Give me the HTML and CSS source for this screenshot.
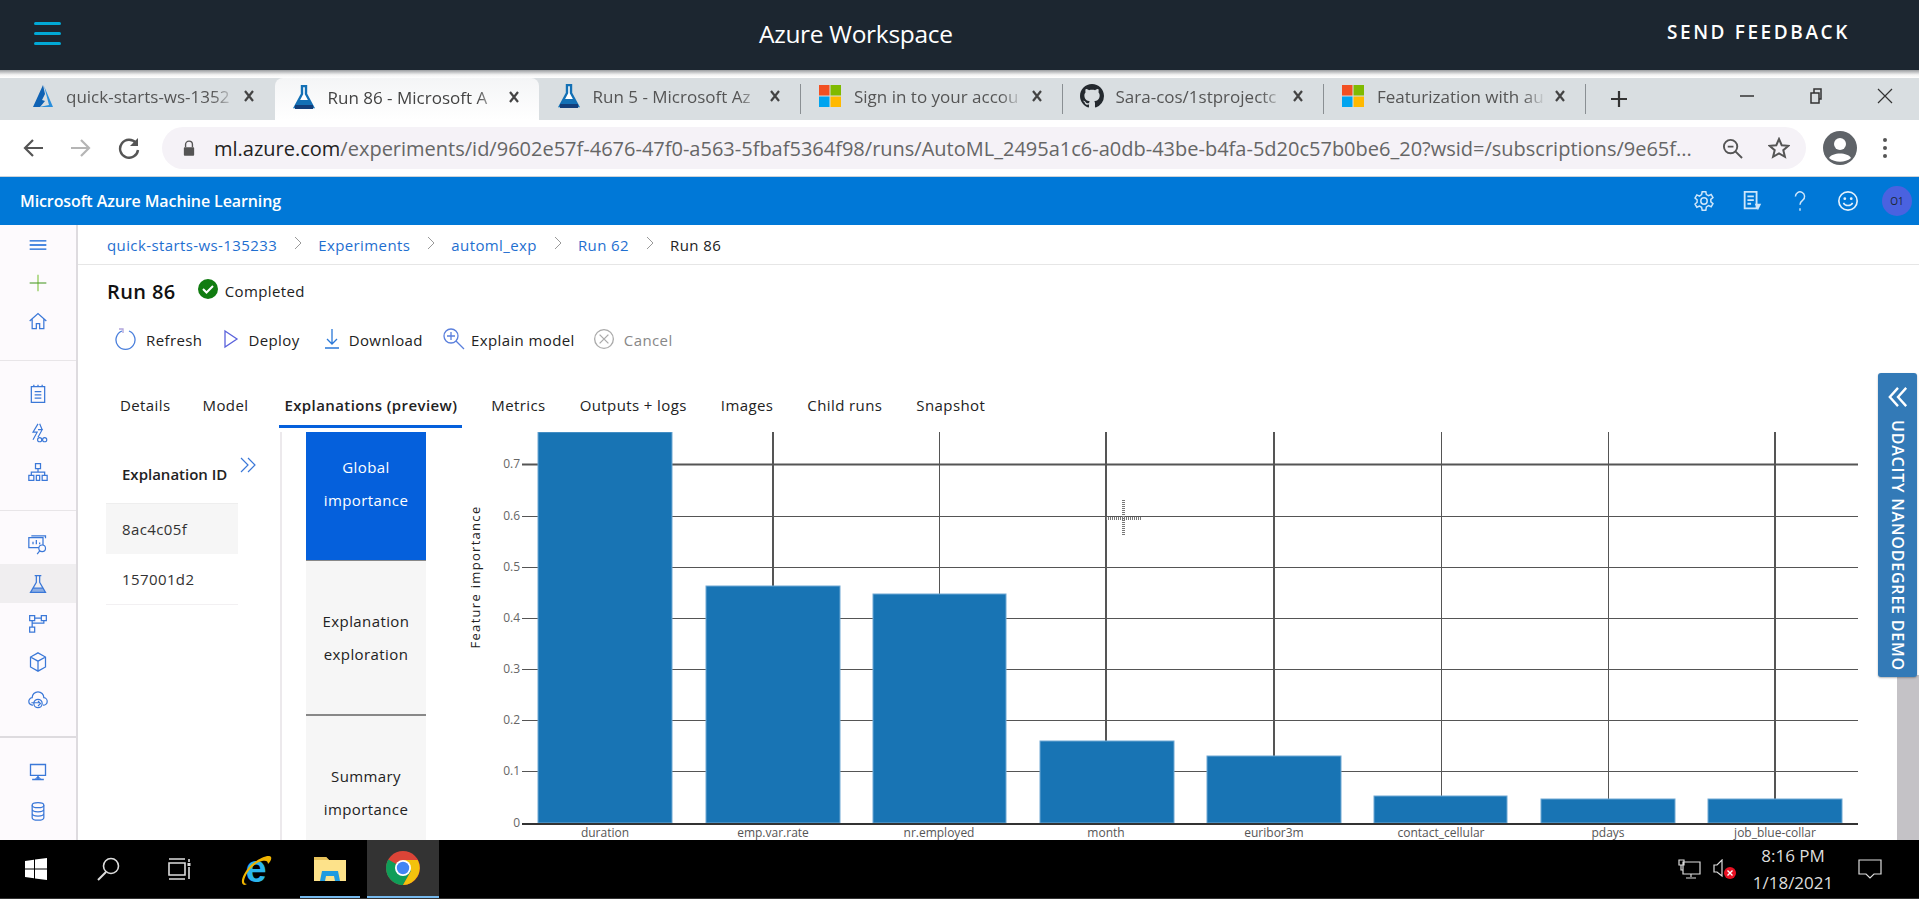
FILE: index.html
```html
<!DOCTYPE html>
<html>
<head>
<meta charset="utf-8">
<title>Azure Workspace</title>
<link rel="stylesheet" href="styles.css">
</head>
<body>
<svg class="defs" width="0" height="0">
  <defs>
    <g id="flask">
      <path d="M10 1h4v8l7 13H3l7-13z" fill="#fff" stroke="#1370b5" stroke-width="2.4"/>
      <path d="M7 15h10l4 7H3z" fill="#1370b5"/>
      <path d="M3 20h18v4H3z" fill="#123e7a"/>
    </g>
    <g id="ms">
      <rect x="1" y="1" width="10.5" height="10.5" fill="#f25022"/>
      <rect x="12.5" y="1" width="10.5" height="10.5" fill="#7fba00"/>
      <rect x="1" y="12.5" width="10.5" height="10.5" fill="#00a4ef"/>
      <rect x="12.5" y="12.5" width="10.5" height="10.5" fill="#ffb900"/>
    </g>
    <path id="tabx" d="M1 1l8 10M9 1L1 11" fill="none" stroke="#444" stroke-width="2.2"/>
  </defs>
</svg>

<header class="topbar">
  <div class="burger"><i></i><i></i><i></i></div>
  <div class="topbar-title">Azure Workspace</div>
  <div class="topbar-send">SEND FEEDBACK</div>
</header>
<div class="topbar-shadow"></div>

<div class="tabstrip">
  <div class="tab">
    <svg class="tab-icon" viewBox="0 0 24 24"><path d="M13 1L3 23h7l5-6-3-1 3-6z" fill="#0f62b4"/><path d="M14 2l9 21H9l10-2z" fill="#2a8fdc"/></svg>
    <span class="tab-title">quick-starts-ws-1352</span>
    <svg class="tab-x" viewBox="0 0 10 12"><use href="#tabx"/></svg>
  </div>
  <i class="tab-sep hidden"></i>
  <div class="tab tab-active">
    <svg class="tab-icon" viewBox="0 0 24 24"><use href="#flask"/></svg>
    <span class="tab-title">Run 86 - Microsoft A</span>
    <svg class="tab-x" viewBox="0 0 10 12"><use href="#tabx"/></svg>
  </div>
  <i class="tab-sep hidden"></i>
  <div class="tab">
    <svg class="tab-icon" viewBox="0 0 24 24"><use href="#flask"/></svg>
    <span class="tab-title">Run 5 - Microsoft Az</span>
    <svg class="tab-x" viewBox="0 0 10 12"><use href="#tabx"/></svg>
  </div>
  <i class="tab-sep"></i>
  <div class="tab">
    <svg class="tab-icon" viewBox="0 0 24 24"><use href="#ms"/></svg>
    <span class="tab-title">Sign in to your accou</span>
    <svg class="tab-x" viewBox="0 0 10 12"><use href="#tabx"/></svg>
  </div>
  <i class="tab-sep"></i>
  <div class="tab">
    <svg class="tab-icon" viewBox="0 0 16 16"><path fill="#24292e" d="M8 0C3.58 0 0 3.58 0 8c0 3.54 2.29 6.53 5.47 7.59.4.07.55-.17.55-.38 0-.19-.01-.82-.01-1.49-2.01.37-2.53-.49-2.69-.94-.09-.23-.48-.94-.82-1.13-.28-.15-.68-.52-.01-.53.63-.01 1.08.58 1.23.82.72 1.21 1.87.87 2.33.66.07-.52.28-.87.51-1.07-1.78-.2-3.64-.89-3.64-3.95 0-.87.31-1.59.82-2.15-.08-.2-.36-1.02.08-2.12 0 0 .67-.21 2.2.82.64-.18 1.32-.27 2-.27s1.36.09 2 .27c1.53-1.04 2.2-.82 2.2-.82.44 1.1.16 1.92.08 2.12.51.56.82 1.27.82 2.15 0 3.07-1.87 3.75-3.65 3.95.29.25.54.73.54 1.48 0 1.07-.01 1.93-.01 2.2 0 .21.15.46.55.38A8.01 8.01 0 0 0 16 8c0-4.42-3.58-8-8-8z"/></svg>
    <span class="tab-title">Sara-cos/1stprojectc</span>
    <svg class="tab-x" viewBox="0 0 10 12"><use href="#tabx"/></svg>
  </div>
  <i class="tab-sep"></i>
  <div class="tab">
    <svg class="tab-icon" viewBox="0 0 24 24"><use href="#ms"/></svg>
    <span class="tab-title">Featurization with au</span>
    <svg class="tab-x" viewBox="0 0 10 12"><use href="#tabx"/></svg>
  </div>
  <i class="tab-sep"></i>
  <svg class="tab-plus" viewBox="0 0 18 18"><path d="M9 1v16M1 9h16" stroke="#333" stroke-width="2.2"/></svg>
  <div class="winctl">
    <svg viewBox="0 0 16 16"><path d="M1 8h14" stroke="#333" stroke-width="1.5"/></svg>
    <svg viewBox="0 0 16 16"><path d="M3 5h8v10H3zM6 5V1h7v10h-2" fill="none" stroke="#333" stroke-width="1.5"/></svg>
    <svg viewBox="0 0 16 16"><path d="M1 1l14 14M15 1L1 15" stroke="#333" stroke-width="1.2"/></svg>
  </div>
</div>

<div class="toolbar">
  <svg class="nav-icon" viewBox="0 0 22 22"><path d="M21 11H3M11 3l-8 8 8 8" fill="none" stroke="#555" stroke-width="2.2"/></svg>
  <svg class="nav-icon" viewBox="0 0 22 22"><path d="M1 11h18M11 3l8 8-8 8" fill="none" stroke="#b5b5b5" stroke-width="2.2"/></svg>
  <svg class="nav-icon" viewBox="0 0 22 22"><path d="M18 6a9 9 0 1 0 2 7" fill="none" stroke="#555" stroke-width="2.4"/><path d="M20 1v8h-8z" fill="#555"/></svg>
  <div class="urlbar">
    <svg class="lock" viewBox="0 0 14 18"><path d="M3 8V5a4 4 0 0 1 8 0v3" fill="none" stroke="#555" stroke-width="1.6"/><rect x="1" y="8" width="12" height="10" rx="1" fill="#555"/></svg>
    <span class="url"><b>ml.azure.com</b>/experiments/id/9602e57f-4676-47f0-a563-5fbaf5364f98/runs/AutoML_2495a1c6-a0db-43be-b4fa-5d20c57b0be6_20?wsid=/subscriptions/9e65f...</span>
    <svg class="url-zoom" viewBox="0 0 22 22"><circle cx="9" cy="9" r="7" fill="none" stroke="#555" stroke-width="2"/><path d="M14 14l7 7M6 9h6" stroke="#555" stroke-width="2"/></svg>
    <svg class="url-star" viewBox="0 0 22 22"><path d="M11 2l2.7 6.2 6.8.6-5.2 4.4 1.6 6.6L11 16.3l-5.9 3.5 1.6-6.6L1.500 8.800l6.800-.6z" fill="none" stroke="#555" stroke-width="2"/></svg>
  </div>
  <svg class="profile" viewBox="0 0 34 34"><circle cx="17" cy="17" r="17" fill="#5f6368"/><circle cx="17" cy="13" r="6" fill="#fff"/><path d="M6 27c3-6 19-6 22 0-6 5-16 5-22 0z" fill="#fff"/></svg>
  <div class="dots"><i></i><i></i><i></i></div>
</div>

<div class="azbar">
  <div class="azbar-title">Microsoft Azure Machine Learning</div>
  <div class="azbar-icons">
    <svg viewBox="0 0 24 24"><circle cx="12" cy="12" r="3.500" fill="none" stroke="#cfe6fa" stroke-width="1.6"/><path d="M10 2h4l.6 3 2.400 1.200 2.800-1.300 2 3.400-2.400 2 .1 2.600 2.300 2-2 3.400-2.800-1.200-2.400 1.300L14 22h-4l-.6-3.100-2.400-1.300-2.800 1.200-2-3.400 2.300-2 0-2.700-2.300-1.900 2-3.400 2.800 1.300L9.400 5z" fill="none" stroke="#cfe6fa" stroke-width="1.600"/></svg>
    <svg viewBox="0 0 24 24"><path d="M4 2h13v18H4zM7 7h7M7 11h7M7 15h4" fill="none" stroke="#cfe6fa" stroke-width="2"/><path d="M15 15h7l-3.500 7z" fill="#cfe6fa"/></svg>
    <svg viewBox="0 0 24 24"><path d="M7 7a5 5 0 1 1 8 4c-2 1.500-3 2.500-3 5M12 20v2.500" fill="none" stroke="#cfe6fa" stroke-width="1.600"/></svg>
    <svg viewBox="0 0 24 24"><circle cx="12" cy="12" r="10" fill="none" stroke="#e4f1fc" stroke-width="1.800"/><circle cx="8.500" cy="9.500" r="1.500" fill="#e4f1fc"/><circle cx="15.500" cy="9.500" r="1.500" fill="#e4f1fc"/><path d="M7 14c2 4 8 4 10 0" fill="none" stroke="#e4f1fc" stroke-width="1.600"/></svg>
    <div class="avatar">O1</div>
  </div>
</div>

<main class="main">
  <nav class="sidebar">
    <div class="side-group side-first">
      <div class="side-item"><svg viewBox="0 0 24 24"><path d="M2 7h20M2 12h20M2 17h20" stroke="#0f62d6" stroke-width="1.600"/></svg></div>
      <div class="side-item"><svg viewBox="0 0 24 24"><path d="M12 2v20" stroke="#a9d67d" stroke-width="2"/><path d="M2 12h20" stroke="#4c9a2a" stroke-width="1.300"/></svg></div>
      <div class="side-item"><svg viewBox="0 0 24 24"><path d="M2 12l10-9 10 9M5 10v11h5v-6h4v6h5V10" fill="none" stroke="#3b78d8" stroke-width="1.500"/></svg></div>
    </div>
    <div class="side-group">
      <div class="side-item"><svg viewBox="0 0 24 24"><path d="M4 3h16v19H4zM7 1v3M12 1v3M17 1v3M8 9h8M8 13h8M8 17h8" fill="none" stroke="#3b78d8" stroke-width="1.500"/></svg></div>
      <div class="side-item"><svg viewBox="0 0 24 24"><path d="M12 1L6 11h5l-5 9M12 8h5l-5 9M14 1l3 7" fill="none" stroke="#3b78d8" stroke-width="1.400"/><circle cx="14" cy="20" r="2.500" fill="none" stroke="#3b78d8" stroke-width="1.400"/><circle cx="20" cy="20" r="2.500" fill="none" stroke="#3b78d8" stroke-width="1.400"/></svg></div>
      <div class="side-item"><svg viewBox="0 0 24 24"><path d="M9 2h6v6H9zM1 16h6v6H1zM17 16h6v6h-6zM12 8v4M4 16v-4h16v4M10 16h4v6h-4z" fill="none" stroke="#3b78d8" stroke-width="1.500"/></svg></div>
    </div>
    <div class="side-group side-tall">
      <div class="side-item"><svg viewBox="0 0 24 24"><path d="M1 3h17v12H1zM4 1h17v3M6 11V8M10 11V6M14 11V9" fill="none" stroke="#3b78d8" stroke-width="1.500"/><circle cx="17" cy="16" r="4" fill="#fdfafd" stroke="#3b78d8" stroke-width="1.400"/><path d="M14 19l-3 4" stroke="#3b78d8" stroke-width="1.400"/></svg></div>
      <div class="side-item side-active"><svg viewBox="0 0 24 24"><path d="M8 2h8M10 2v8L3 22h18l-7-12V2M6 17h12" fill="none" stroke="#3b78d8" stroke-width="1.500"/><path d="M6 17h12l3 5H3z" fill="#3b78d8" opacity=".55"/></svg></div>
      <div class="side-item"><svg viewBox="0 0 24 24"><path d="M2 3h6v6H2zM16 3h6v6h-6zM2 17h6v6H2zM8 6h8M5 9v8M19 9v3H5" fill="none" stroke="#3b78d8" stroke-width="1.500"/></svg></div>
      <div class="side-item"><svg viewBox="0 0 24 24"><path d="M12 1l9 5v12l-9 5-9-5V6zM3 6l9 5 9-5M12 11v12" fill="none" stroke="#3b78d8" stroke-width="1.500"/></svg></div>
      <div class="side-item"><svg viewBox="0 0 24 24"><path d="M6 17a4.500 4.500 0 0 1-1-9 7 7 0 0 1 14 0 4.500 4.500 0 0 1-1 9" fill="none" stroke="#3b78d8" stroke-width="1.500"/><circle cx="12" cy="15" r="5" fill="none" stroke="#3b78d8" stroke-width="1.500"/><path d="M4 14h10M12 12l3 3-3 3" fill="none" stroke="#3b78d8" stroke-width="1.300"/></svg></div>
    </div>
    <div class="side-group side-last">
      <div class="side-item"><svg viewBox="0 0 24 24"><path d="M3 3h18v13H3zM12 16v4M5 21h14" fill="none" stroke="#3b78d8" stroke-width="1.600"/><path d="M8 20l4-3 4 3z" fill="#3b78d8"/></svg></div>
      <div class="side-item"><svg viewBox="0 0 24 24"><ellipse cx="12" cy="5" rx="7" ry="3" fill="none" stroke="#3b78d8" stroke-width="1.500"/><path d="M5 5v15c0 4 14 4 14 0V5M5 10c0 4 14 4 14 0M5 15c0 4 14 4 14 0" fill="none" stroke="#3b78d8" stroke-width="1.500"/></svg></div>
    </div>
  </nav>

  <section class="content">
    <div class="crumbs">
      <a>quick-starts-ws-135233</a><svg viewBox="0 0 8 14"><path d="M1 1l6 6-6 6" fill="none" stroke="#999"/></svg>
      <a>Experiments</a><svg viewBox="0 0 8 14"><path d="M1 1l6 6-6 6" fill="none" stroke="#999"/></svg>
      <a>automl_exp</a><svg viewBox="0 0 8 14"><path d="M1 1l6 6-6 6" fill="none" stroke="#999"/></svg>
      <a>Run 62</a><svg viewBox="0 0 8 14"><path d="M1 1l6 6-6 6" fill="none" stroke="#999"/></svg>
      <span>Run 86</span>
    </div>

    <div class="run-head">
      <h1>Run 86</h1>
      <svg class="ok" viewBox="0 0 20 20"><circle cx="10" cy="10" r="10" fill="#107c10"/><path d="M5 10l3.500 3.500L15 7" fill="none" stroke="#fff" stroke-width="2"/></svg>
      <span>Completed</span>
    </div>

    <div class="commands">
      <div class="cmd cmd-refresh"><svg viewBox="0 0 22 22"><path d="M7 3a9.500 9.500 0 1 0 7 0" fill="none" stroke="#4a7fdc" stroke-width="1.300"/><path d="M4 1h4v4" fill="none" stroke="#b0a4dc" stroke-width="1.300"/></svg>Refresh</div>
      <div class="cmd cmd-deploy"><svg viewBox="0 0 16 22"><path d="M2 3l12 8-12 8z" fill="none" stroke="#5a62dc" stroke-width="1.300"/></svg>Deploy</div>
      <div class="cmd cmd-download"><svg viewBox="0 0 16 22"><path d="M8 1v15M3 11l5 5 5-5M1 20h14" fill="none" stroke="#2a78d8" stroke-width="1.300"/></svg>Download</div>
      <div class="cmd cmd-explain"><svg viewBox="0 0 22 22"><circle cx="8" cy="8" r="7" fill="none" stroke="#5a7fdc" stroke-width="1.300"/><path d="M13 13l8 8M4 8h8M8 4v8" stroke="#5a7fdc" stroke-width="1.300"/></svg>Explain model</div>
      <div class="cmd cmd-cancel"><svg viewBox="0 0 20 20"><circle cx="10" cy="10" r="8.500" fill="none" stroke="#aaa" stroke-width="1.200"/><path d="M6 6l8 8M14 6l-8 8" stroke="#aaa" stroke-width="1.200"/></svg>Cancel</div>
    </div>

    <div class="tabs">
      <a class="tab-details">Details</a>
      <a class="tab-model">Model</a>
      <a class="on">Explanations (preview)</a>
      <a>Metrics</a>
      <a>Outputs + logs</a>
      <a>Images</a>
      <a>Child runs</a>
      <a>Snapshot</a>
    </div>

    <div class="panels">
      <div class="expl-list">
        <div class="expl-head">Explanation ID
          <svg viewBox="0 0 16 16"><path d="M1 1l7 7-7 7M8 1l7 7-7 7" fill="none" stroke="#3b78d8" stroke-width="1.200"/></svg>
        </div>
        <div class="expl-item expl-on">8ac4c05f</div>
        <div class="expl-item">157001d2</div>
      </div>
      <div class="views">
        <div class="view view-on">Global<br>importance</div>
        <div class="view view-mid">Explanation<br>exploration</div>
        <div class="view view-end">Summary<br>importance</div>
      </div>
      <svg class="chart" viewBox="426 432 1493 408">
        <g class="grid">
          <path class="heavy" d="M522 464.500H1858"/>
          <path d="M522 516.500H1858M522 567.500H1858M522 618.500H1858M522 669.500H1858M522 720.500H1858M522 771.500H1858"/>
          <path class="heavy" d="M606 432V823M773 432V823M1106 432V823M1274 432V823M1775 432V823"/>
          <path d="M939.500 432V823M1441.500 432V823M1608.500 432V823"/>
        </g>
        <g class="bars">
          <rect x="538" y="432" width="134" height="391"/>
          <rect x="706" y="586" width="134" height="237"/>
          <rect x="873" y="594" width="133" height="229"/>
          <rect x="1040" y="741" width="134" height="82"/>
          <rect x="1207" y="756" width="134" height="67"/>
          <rect x="1374" y="796" width="133" height="27"/>
          <rect x="1541" y="799" width="134" height="24"/>
          <rect x="1708" y="799" width="134" height="24"/>
        </g>
        <path class="axis" d="M522 824H1858"/>
        <g class="yticks">
          <text x="520" y="468">0.7</text>
          <text x="520" y="520">0.6</text>
          <text x="520" y="571">0.5</text>
          <text x="520" y="622">0.4</text>
          <text x="520" y="673">0.3</text>
          <text x="520" y="724">0.2</text>
          <text x="520" y="775">0.1</text>
          <text x="520" y="827">0</text>
        </g>
        <text class="ytitle" transform="translate(480 577) rotate(-90)">Feature importance</text>
        <g class="xticks">
          <text x="605" y="837">duration</text>
          <text x="773" y="837">emp.var.rate</text>
          <text x="939" y="837">nr.employed</text>
          <text x="1106" y="837">month</text>
          <text x="1274" y="837">euribor3m</text>
          <text x="1441" y="837">contact_cellular</text>
          <text x="1608" y="837">pdays</text>
          <text x="1775" y="837">job_blue-collar</text>
        </g>
        <path class="cursor" d="M1106 518.500H1141M1123.500 500V536"/>
      </svg>
    </div>
  </section>

  <div class="scrollbar"></div>
  <aside class="udacity">
    <svg viewBox="0 0 22 22"><path d="M11 1L2 11l9 10M20 1l-9 10 9 10" fill="none" stroke="#fff" stroke-width="2.600"/></svg>
    <span>UDACITY NANODEGREE DEMO</span>
  </aside>
</main>

<footer class="taskbar">
  <div class="task"><svg viewBox="0 0 24 24"><path d="M1 4l9-1.300V11.500H1zM11 2.500L23 1v10.500H11zM1 12.500h9v8.800L1 20zM11 12.500h12V23l-12-1.600z" fill="#fff"/></svg></div>
  <div class="task"><svg viewBox="0 0 24 24"><circle cx="15" cy="9" r="7.500" fill="none" stroke="#ddd" stroke-width="1.600"/><path d="M10 15l-8 8" stroke="#ddd" stroke-width="2"/></svg></div>
  <div class="task"><svg viewBox="0 0 24 24"><path d="M1 6h16v12H1zM1 2h16M1 22h16M21 2v3M21 10v12" fill="none" stroke="#ddd" stroke-width="1.600"/><rect x="19.500" y="6" width="3" height="3" fill="#ddd"/></svg></div>
  <div class="task task-ie"><svg viewBox="-6 -8 46 46">
    <text x="17" y="28" text-anchor="middle" class="ie-e">e</text>
    <path d="M6 31C0 31 3 20 12 11 20 4 30 0 32 3c1 2-1 5-3 7 0-3-2-4-6-3C14 9 6 20 5 27c0 2 1 3 3 3z" fill="#f0b400"/>
  </svg></div>
  <div class="task task-folder"><svg viewBox="0 0 34 28"><path d="M1 3h12l3 3h17v21H1z" fill="#fde28a"/><path d="M1 3h12l3 3H1z" fill="#e7c25a"/><path d="M7 27l2-10h16l2 10h-5l-1-5h-8l-1 5z" fill="#1f9be0"/></svg></div>
  <div class="task task-chrome"><svg viewBox="0 0 34 34">
    <circle cx="17" cy="17" r="17" fill="#db4437"/>
    <path d="M17 17L2.300 8.500A17 17 0 0 0 17 34l8.500-14.700z" fill="#0f9d58"/>
    <path d="M17 9h14.700A17 17 0 0 1 17 34l8-14z" fill="#f4c20d"/>
    <circle cx="17" cy="17" r="8" fill="#fff"/><circle cx="17" cy="17" r="6.200" fill="#4285f4"/>
  </svg></div>
  <div class="tray">
    <svg class="tray-net" viewBox="0 0 24 20"><path d="M6 3h17v12H6zM14 15v3M9 19h10M2 1h5v5H2zM4 6v5h2" fill="none" stroke="#ddd" stroke-width="1.200"/></svg>
    <svg class="tray-vol" viewBox="0 0 24 20"><path d="M1 6h3l5-5v16l-5-4H1z" fill="none" stroke="#ddd" stroke-width="1.200"/><circle cx="17" cy="14" r="6" fill="#e81123"/><path d="M14.500 11.500l5 5M19.500 11.500l-5 5" stroke="#fff" stroke-width="1.400"/></svg>
    <div class="clock">8:16 PM<br>1/18/2021</div>
    <svg class="tray-note" viewBox="0 0 24 20"><path d="M1 1h22v14h-7l-4 4-4-4H1z" fill="none" stroke="#ddd" stroke-width="1.200"/></svg>
  </div>
</footer>
</body>
</html>
```

FILE: styles.css
```css
html, body {
  margin: 0;
  height: 899px;
  overflow: hidden;
  background: #fff;
  font-family: "Open Sans", "Noto Sans", sans-serif;
  color: #222;
}
.defs {
  position: absolute;
}

/* udacity bar */
.topbar {
  height: 70px;
  background: #1c2630;
  color: #fff;
  display: flex;
  align-items: center;
  position: relative;
}
.burger {
  width: 27px;
  margin: -4px 0 0 34px;
  display: flex;
  flex-direction: column;
  gap: 7px;
}
.burger i {
  height: 3px;
  border-radius: 2px;
  background: #02a9d6;
}
.topbar-title {
  margin-left: 698px;
  margin-top: -4px;
  font-size: 24.5px;
  letter-spacing: -0.3px;
}
.topbar-send {
  margin-left: auto;
  margin-right: 69px;
  margin-top: -6px;
  font-size: 19px;
  font-weight: 600;
  letter-spacing: 2.6px;
}
.topbar-shadow {
  height: 8px;
  background: linear-gradient(#9a9da0, #f3f3f3 60%, #fff);
}

/* chrome */
.tabstrip {
  height: 42px;
  background: #d9dee1;
  display: flex;
  align-items: center;
  padding-left: 13px;
}
.tab {
  width: 260.5px;
  height: 42px;
  flex: none;
  box-sizing: border-box;
  display: flex;
  align-items: center;
  padding: 0 20px 6px 17px;
  font-size: 17px;
  color: #555;
}
.tab-active {
  width: 264px;
  padding-top: 2px;
  background: linear-gradient(#f4f5f6, #fff);
  border-radius: 8px 8px 0 0;
  color: #444;
}
.tab-icon {
  width: 24px;
  height: 24px;
  flex: none;
}
.tab-title {
  flex: 1;
  min-width: 0;
  margin: 0 12px;
  white-space: nowrap;
  -webkit-mask-image: linear-gradient(to right, #000 88%, transparent 102%);
  mask-image: linear-gradient(to right, #000 88%, transparent 102%);
}
.tab-x {
  width: 10px;
  height: 12px;
  flex: none;
}
.tab-sep {
  width: 1px;
  height: 30px;
  flex: none;
  background: #8a8f93;
}
.tab-sep.hidden {
  background: none;
}
.tab-plus {
  width: 18px;
  height: 18px;
  margin-left: 24px;
}
.winctl {
  margin-left: auto;
  margin-right: 26px;
  margin-top: -6px;
  display: flex;
  gap: 53px;
}
.winctl svg {
  width: 16px;
  height: 16px;
}
.toolbar {
  height: 56px;
  background: #fff;
  border-bottom: 1px solid #cbd3da;
  display: flex;
  align-items: center;
  padding-left: 22px;
}
.nav-icon {
  width: 22px;
  height: 22px;
  margin-right: 26px;
  flex: none;
}
.urlbar {
  width: 1644px;
  height: 42px;
  margin-left: -4px;
  box-sizing: border-box;
  border-radius: 21px;
  background: #f5f2f7;
  display: flex;
  align-items: center;
  padding-left: 21px;
  flex: none;
}
.lock {
  width: 12px;
  height: 18px;
  flex: none;
}
.url {
  width: 1484px;
  margin-left: 19px;
  font-size: 20px;
  color: #666;
  white-space: nowrap;
  flex: none;
}
.url b {
  font-weight: 400;
  color: #222;
}
.url-zoom {
  width: 21px;
  height: 21px;
  margin-left: 24px;
}
.url-star {
  width: 22px;
  height: 22px;
  margin-left: 25px;
}
.profile {
  width: 34px;
  height: 34px;
  margin-left: 17px;
  flex: none;
}
.dots {
  margin-left: 26px;
  display: flex;
  flex-direction: column;
  gap: 4px;
}
.dots i {
  width: 4px;
  height: 4px;
  border-radius: 2px;
  background: #555;
}

/* azure header */
.azbar {
  height: 48px;
  background: #0078d7;
  color: #fff;
  display: flex;
  align-items: center;
  padding-left: 20px;
}
.azbar-title {
  font-size: 16px;
  font-weight: 600;
  letter-spacing: -0.1px;
}
.azbar-icons {
  margin-left: auto;
  margin-right: 7px;
  display: flex;
  align-items: center;
  gap: 26px;
}
.azbar-icons svg {
  width: 22px;
  height: 24px;
}
.avatar {
  width: 30px;
  height: 30px;
  margin-left: -3px;
  border-radius: 50%;
  background: #4a62e0;
  color: #1c2630;
  font-size: 10px;
  line-height: 30px;
  text-align: center;
}

/* page */
.main {
  height: 615px;
  display: flex;
  position: relative;
}
.sidebar {
  width: 76px;
  flex: none;
  background: #fdfafd;
  border-right: 2px solid #dedbdf;
  display: flex;
  flex-direction: column;
}
.side-group {
  box-sizing: border-box;
  height: 150px;
  padding-top: 13px;
  border-bottom: 1px solid #e8e5e8;
}
.side-first {
  height: 136px;
  padding-top: 1px;
}
.side-first .side-item {
  height: 38px;
}
.side-tall {
  height: 227px;
  padding-top: 14px;
  border-bottom-width: 2px;
  border-bottom-color: #dedbdf;
}
.side-last {
  flex: 1;
  padding-top: 14px;
  border-bottom: 0;
}
.side-item {
  height: 39px;
  display: flex;
  align-items: center;
  justify-content: center;
}
.side-item svg {
  width: 20px;
  height: 20px;
}
.side-active {
  background: #f0eef0;
}
.content {
  flex: 1;
  min-width: 0;
  display: flex;
  flex-direction: column;
  font-size: 15px;
  letter-spacing: 0.4px;
}
.crumbs {
  height: 39px;
  flex: none;
  box-sizing: content-box;
  border-bottom: 1px solid #e6e6e6;
  display: flex;
  align-items: center;
  padding-left: 29px;
  color: #222;
  line-height: 36px;
}
.crumbs a {
  color: #1f6fd0;
}
.crumbs svg {
  width: 8px;
  height: 14px;
  margin: -4px 16px 0 17px;
}
.run-head {
  height: 52px;
  flex: none;
  display: flex;
  align-items: center;
  padding-left: 29px;
}
.run-head h1 {
  margin: 0 22px 0 0;
  font-size: 20px;
  font-weight: 600;
  color: #111;
}
.ok {
  width: 20px;
  height: 20px;
  margin: -5px 7px 0 0;
}
.commands {
  height: 46px;
  flex: none;
  display: flex;
  align-items: center;
}
.cmd {
  display: flex;
  align-items: center;
  gap: 9px;
}
.cmd svg {
  width: 22px;
  height: 22px;
  margin-top: -3px;
}
.cmd-refresh {
  margin-left: 37px;
}
.cmd-deploy {
  margin-left: 21px;
}
.cmd-deploy svg, .cmd-download svg {
  width: 16px;
}
.cmd-download {
  margin-left: 24px;
}
.cmd-explain {
  margin-left: 20px;
  gap: 6px;
}
.cmd-cancel {
  margin-left: 18px;
  color: #888;
}
.tabs {
  height: 69px;
  flex: none;
  display: flex;
  align-items: flex-start;
  padding: 22px 0 0 37px;
  box-sizing: border-box;
  gap: 24px;
}
.tabs a {
  padding: 0 5px 3px;
  height: 43px;
  line-height: 40px;
  box-sizing: border-box;
  border-bottom: 3px solid transparent;
  white-space: nowrap;
}
.tabs a.tab-model {
  margin-left: -2px;
}
.tabs a.on {
  margin-left: 2px;
  border-bottom-color: #0560dc;
  font-weight: 600;
}
.panels {
  flex: 1;
  min-height: 0;
  display: flex;
}
.expl-list {
  width: 204px;
  flex: none;
  box-sizing: border-box;
  padding: 0 42px 0 28px;
  border-right: 2px solid #ece9ec;
}
.expl-head {
  height: 71px;
  padding-left: 16px;
  box-sizing: border-box;
  padding-top: 32px;
  font-weight: 600;
  letter-spacing: 0;
  white-space: nowrap;
  position: relative;
}
.expl-head svg {
  width: 16px;
  height: 16px;
  position: absolute;
  left: 134px;
  top: 25px;
}
.expl-item {
  height: 50px;
  line-height: 50px;
  padding-left: 16px;
  border-bottom: 1px solid #f2f0f2;
  color: #333;
}
.expl-on {
  background: #f6f6f6;
  border-bottom: 0;
  border-top: 1px solid #eee;
}
.views {
  width: 120px;
  flex: none;
  margin-left: 24px;
  display: flex;
  flex-direction: column;
  line-height: 33px;
  text-align: center;
  background: #f6f6f6;
}
.view {
  box-sizing: border-box;
  display: flex;
  align-items: center;
  justify-content: center;
}
.view-on {
  height: 129px;
  padding-bottom: 24px;
  background: #0560dc;
  color: #fff;
  border-bottom: 1px solid #888;
}
.view-mid {
  height: 155px;
  border-bottom: 2px solid #888;
}
.view-end {
  flex: 1;
  padding-top: 30px;
}
.chart {
  width: 1493px;
  height: 408px;
  flex: none;
  letter-spacing: 0;
}
.grid path {
  stroke: #555;
  stroke-width: 1;
  fill: none;
}
.grid path.heavy {
  stroke-width: 2;
}
.bars rect {
  fill: #1874b4;
  stroke: #6fa8d3;
  stroke-width: 1;
}
.axis {
  stroke: #333;
  stroke-width: 2;
}
.yticks text {
  font-size: 12px;
  fill: #666;
  text-anchor: end;
}
.xticks text {
  font-size: 12px;
  fill: #555;
  text-anchor: middle;
}
.ytitle {
  font-size: 13px;
  fill: #222;
  text-anchor: middle;
  letter-spacing: 1.3px;
}
.cursor {
  stroke: #777;
  stroke-width: 3;
  stroke-dasharray: 1 1;
  fill: none;
}
.scrollbar {
  position: absolute;
  right: 0;
  top: 450px;
  bottom: 0;
  width: 22px;
  background: #c4c2c6;
}
.udacity {
  position: absolute;
  right: 2px;
  top: 148px;
  width: 39px;
  height: 304px;
  box-sizing: border-box;
  border-radius: 3px;
  background: #337ab7;
  color: #fff;
  box-shadow: 0 1px 2px rgba(0, 0, 0, 0.3);
  display: flex;
  flex-direction: column;
  align-items: center;
  padding-top: 14px;
  gap: 13px;
}
.udacity svg {
  width: 20px;
  height: 20px;
  flex: none;
}
.udacity span {
  writing-mode: vertical-rl;
  font-size: 16px;
  font-weight: 600;
  letter-spacing: 0.8px;
  white-space: nowrap;
}

/* windows taskbar */
.taskbar {
  height: 59px;
  background: #000;
  display: flex;
  align-items: center;
  position: relative;
  border-bottom: 1px solid #333;
  box-sizing: border-box;
}
.task {
  width: 72px;
  height: 100%;
  flex: none;
  display: flex;
  align-items: center;
  justify-content: center;
}
.task svg {
  width: 24px;
  height: 24px;
}
.task-chrome svg {
  width: 34px;
  height: 34px;
}
.task-ie svg {
  width: 46px;
  height: 46px;
}
.task-folder svg {
  width: 34px;
  height: 28px;
}
.task-folder {
  border-bottom: 2px solid #76b9ed;
  box-sizing: border-box;
  margin-right: 7px;
  width: 60px;
  margin-left: 12px;
}
.task-ie {
  width: 72px;
  margin-right: -4px;
  margin-left: 4px;
}
.task-chrome {
  background: #333;
  border-bottom: 2px solid #76b9ed;
  box-sizing: border-box;
}
.ie-e {
  font-family: "Liberation Sans", sans-serif;
  font-size: 38px;
  font-weight: 700;
  fill: #2bb5ec;
}
.tray {
  margin-left: auto;
  display: flex;
  align-items: center;
  color: #ddd;
}
.tray svg {
  width: 24px;
  height: 20px;
  flex: none;
}
.tray-vol {
  margin-left: 12px;
}
.clock {
  width: 110px;
  margin-left: 1px;
  font-size: 17px;
  line-height: 27px;
  text-align: center;
}
.tray-note {
  margin: 0 37px 0 10px;
}
```
